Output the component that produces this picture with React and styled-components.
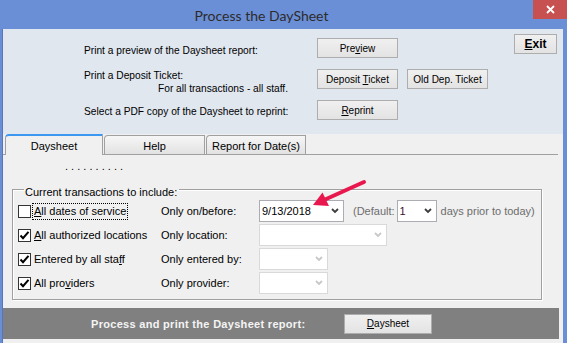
import React from 'react';
import styled, { createGlobalStyle } from 'styled-components';

const GlobalStyle = createGlobalStyle`
  html, body {
    margin: 0;
    padding: 0;
    overflow: hidden;
    background: #6b8fd6;
  }
  * {
    box-sizing: border-box;
  }
`;

const Window = styled.div`
  position: relative;
  width: 567px;
  height: 343px;
  background: #6b8fd6;
  display: flex;
  flex-direction: column;
  font-family: "Liberation Sans", Arial, sans-serif;
  font-size: 11px;
  color: #000;
`;

const TitleBar = styled.div`
  height: 29px;
  display: grid;
  grid-template-columns: 1fr 34px;
`;

const Title = styled.div`
  align-self: center;
  text-align: center;
  padding: 1px 10px 0 0;
  font-family: Lato, "Noto Sans", sans-serif;
  font-size: 14px;
  color: #2b2b2b;
`;

const CloseButton = styled.div`
  width: 34px;
  height: 19px;
  background: #c75050;
  display: flex;
  align-items: center;
  justify-content: center;
`;

const Client = styled.div`
  flex: 1;
  margin: 0 4px 0 3px;
  background: #f0f0f0;
  display: flex;
  flex-direction: column;
  box-shadow: -1px 0 0 #5578bd;
`;

const TopPanel = styled.div`
  height: 105px;
  background: #e0e7ef;
  display: flex;
  padding: 9px 6px 0 81px;
`;

const ActionGrid = styled.div`
  display: grid;
  grid-template-columns: 224px 81px 81px;
  grid-template-rows: repeat(3, 20px);
  column-gap: 9px;
  row-gap: 11px;
`;

const ActionLabel = styled.div`
  grid-column: 1;
  min-width: 0;
  padding-top: ${p => p.offset || 0}px;
  font-size: 10.2px;
  line-height: 13px;
  white-space: nowrap;
`;

const Indent = styled.div`
  padding-left: 74px;
`;

const Button = styled.button`
  font-family: "Liberation Sans", Arial, sans-serif;
  font-size: ${p => (p.big ? '12px' : '10px')};
  font-weight: ${p => (p.big ? 'bold' : 'normal')};
  color: #000;
  width: ${p => p.w || 81}px;
  height: 20px;
  padding: 0;
  background: linear-gradient(#f0f0f0, #e3e3e3);
  border: 1px solid #adadad;
  border-radius: 0;
  white-space: nowrap;
`;

const ExitButton = styled(Button)`
  margin-left: auto;
  margin-top: -4px;
  align-self: flex-start;
`;

const TabStrip = styled.div`
  height: 21px;
  margin-right: 5px;
  padding-left: 2px;
  display: flex;
  align-items: flex-end;
  gap: 1px;
  border-bottom: 1px solid #a0a0a0;
`;

const Tab = styled.div`
  width: ${p => p.w}px;
  height: ${p => (p.active ? 21 : 19)}px;
  margin-bottom: ${p => (p.active ? -1 : 0)}px;
  border: 1px solid #a0a0a0;
  border-bottom: none;
  border-top: ${p => (p.active ? '2px solid #3c97f0' : '1px solid #a0a0a0')};
  border-radius: 4px 0 0 0;
  background: ${p => (p.active ? '#f0f0f0' : 'linear-gradient(#f6f6f6, #e2e2e2)')};
  display: flex;
  align-items: center;
  justify-content: center;
  padding-top: ${p => (p.active ? 0 : 1)}px;
  font-size: 11px;
`;

const Dots = styled.div`
  padding-left: 62px;
  margin-top: 5px;
  line-height: 13px;
  white-space: pre;
`;

const GroupBox = styled.fieldset`
  margin: 6px 0 0 9px;
  width: 530px;
  min-width: 0;
  border: 1px solid #a0a0a0;
  box-shadow: 1px 1px 0 #fff, inset 1px 1px 0 #fff;
  padding: 1px 0 5px 5px;
`;

const Legend = styled.legend`
  margin-left: 6px;
  padding: 6px 2px 0 1px;
  line-height: 14px;
`;

const OptionGrid = styled.div`
  display: grid;
  grid-template-columns: 143px 98px auto;
  grid-auto-rows: 22px;
  row-gap: 2px;
  align-items: center;
`;

const CheckRow = styled.label`
  display: flex;
  align-items: center;
`;

const Box = styled.span`
  width: 13px;
  height: 13px;
  border: 1px solid #333;
  background: #fff;
  display: flex;
  align-items: center;
  justify-content: center;
`;

const CheckText = styled.span`
  margin-left: 2px;
  padding: 1px 1px;
  line-height: 13px;
  white-space: nowrap;
  outline: ${p => (p.focused ? '1px dotted #000' : 'none')};
`;

const FieldLabel = styled.span`
  white-space: nowrap;
`;

const FieldCell = styled.div`
  display: flex;
  align-items: center;
  height: 22px;
`;

const Select = styled.div`
  width: ${p => p.w}px;
  height: 22px;
  flex-shrink: 0;
  background: #fff;
  border: 1px solid ${p => (p.disabled ? '#d9d9d9' : '#abadb3')};
  display: flex;
  align-items: center;
  justify-content: space-between;
  padding: 0 4px 0 2px;
  color: ${p => p.color || '#000'};
`;

const Muted = styled.span`
  color: #6d6d6d;
  white-space: nowrap;
  margin-left: ${p => p.gap || 0}px;
  margin-right: ${p => p.after || 0}px;
`;

const ProcessBar = styled.div`
  margin: 8px 4px 0 0;
  height: 31px;
  background: #808080;
  display: grid;
  grid-template-columns: 253px 88px;
  align-items: center;
  padding-left: 88px;
`;

const ProcessText = styled.span`
  color: #f4f4f4;
  font-weight: bold;
  font-size: 11px;
  letter-spacing: 0.3px;
  white-space: nowrap;
`;

const Arrow = styled.svg`
  position: absolute;
  left: 308px;
  top: 178px;
  pointer-events: none;
`;

const U = styled.span`
  text-decoration: underline;
`;

function Chevron({ disabled }) {
  return (
    <svg width="8" height="6" viewBox="0 0 8 6">
      <polyline points="1,1 4,4 7,1" fill="none" stroke={disabled ? '#c8c8c8' : '#3c3c3c'} strokeWidth="1.8" />
    </svg>
  );
}

function Check() {
  return (
    <svg width="11" height="11" viewBox="0 0 11 11">
      <polyline points="1.5,5.5 4,8.2 9.5,1.8" fill="none" stroke="#000" strokeWidth="2" />
    </svg>
  );
}

function CheckOption({ checked, focused, children }) {
  return (
    <CheckRow>
      <Box>{checked && <Check />}</Box>
      <CheckText focused={focused}>{children}</CheckText>
    </CheckRow>
  );
}

export default function App() {
  return (
    <Window>
      <GlobalStyle />
      <TitleBar>
        <Title>Process the DaySheet</Title>
        <CloseButton>
          <svg width="9" height="9" viewBox="0 0 9 9">
            <path d="M1 1 L8 8 M8 1 L1 8" stroke="#fff" strokeWidth="1.8" />
          </svg>
        </CloseButton>
      </TitleBar>
      <Client>
        <TopPanel>
          <ActionGrid>
            <ActionLabel offset={6}>Print a preview of the Daysheet report:</ActionLabel>
            <Button>Pre<U>v</U>iew</Button>
            <span />
            <ActionLabel>
              Print a Deposit Ticket:
              <Indent>For all transactions - all staff.</Indent>
            </ActionLabel>
            <Button>Deposit <U>T</U>icket</Button>
            <Button>Old Dep. Ticket</Button>
            <ActionLabel offset={5}>Select a PDF copy of the Daysheet to reprint:</ActionLabel>
            <Button><U>R</U>eprint</Button>
          </ActionGrid>
          <ExitButton big w={43}><U>E</U>xit</ExitButton>
        </TopPanel>
        <TabStrip>
          <Tab active w={98}>Daysheet</Tab>
          <Tab w={101}>Help</Tab>
          <Tab w={100}>Report for Date(s)</Tab>
        </TabStrip>
        <Dots>. . . . . . . . . .</Dots>
        <GroupBox>
          <Legend>Current transactions to include:</Legend>
          <OptionGrid>
            <CheckOption focused><U>A</U>ll dates of service</CheckOption>
            <FieldLabel>Only on/before:</FieldLabel>
            <FieldCell>
              <Select w={85}>9/13/2018<Chevron /></Select>
              <Muted gap={9} after={2}>(Default:</Muted>
              <Select w={40} color="#3d0a30">1<Chevron /></Select>
              <Muted gap={4}>days prior to today)</Muted>
            </FieldCell>
            <CheckOption checked><U>A</U>ll authorized locations</CheckOption>
            <FieldLabel>Only location:</FieldLabel>
            <FieldCell><Select w={128} disabled><span /><Chevron disabled /></Select></FieldCell>
            <CheckOption checked>Entered by all sta<U>f</U>f</CheckOption>
            <FieldLabel>Only entered by:</FieldLabel>
            <FieldCell><Select w={69} disabled><span /><Chevron disabled /></Select></FieldCell>
            <CheckOption checked>All pro<U>v</U>iders</CheckOption>
            <FieldLabel>Only provider:</FieldLabel>
            <FieldCell><Select w={69} disabled><span /><Chevron disabled /></Select></FieldCell>
          </OptionGrid>
        </GroupBox>
        <ProcessBar>
          <ProcessText>Process and print the Daysheet report:</ProcessText>
          <Button w={88}><U>D</U>aysheet</Button>
        </ProcessBar>
      </Client>
      <Arrow width="60" height="32" viewBox="0 0 60 32">
        <line x1="56" y1="4" x2="16" y2="22" stroke="#e8184e" strokeWidth="4" strokeLinecap="round" />
        <polygon points="5,27 14.5,14.5 21,28" fill="#e8184e" />
      </Arrow>
    </Window>
  );
}
